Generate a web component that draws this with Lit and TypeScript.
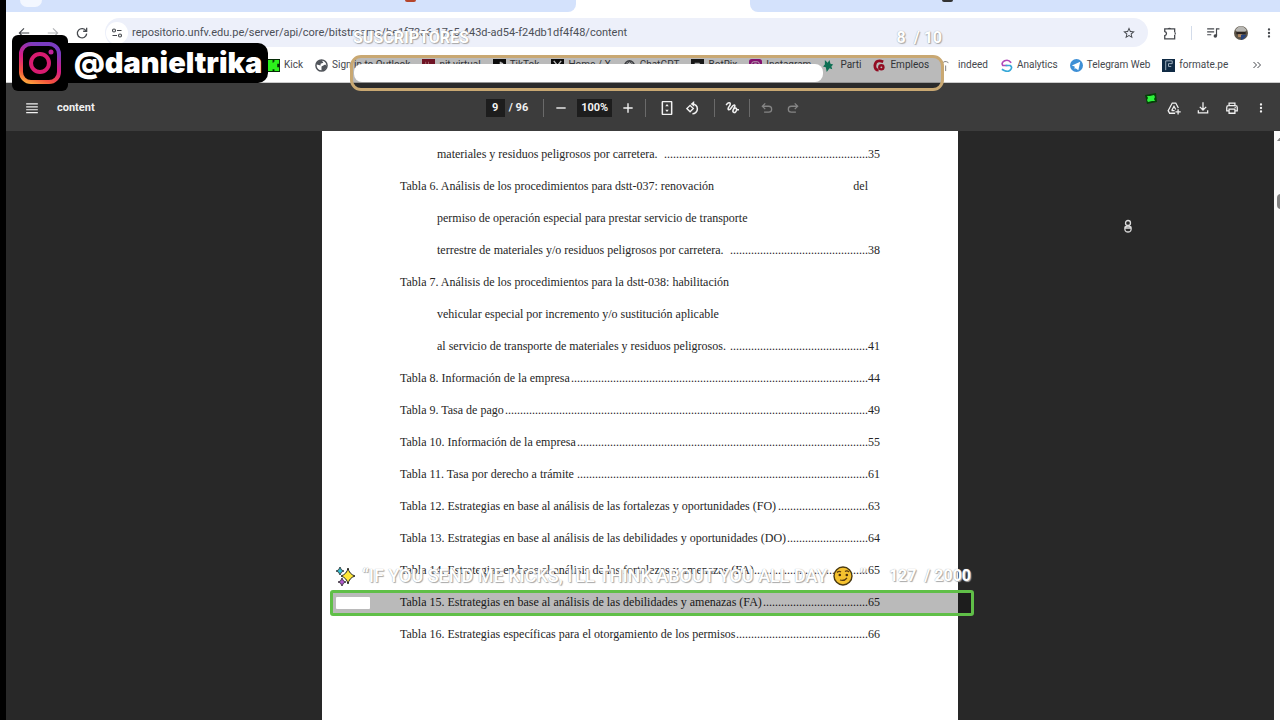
import { LitElement, html, svg, css, nothing } from "lit";
import { customElement } from "lit/decorators.js";

const glyph = (body: unknown, cls = "ico", box = "0 0 24 24") =>
  html`<svg class=${cls} viewBox=${box} aria-hidden="true">${body}</svg>`;
const fill = (d: string) => svg`<path fill="currentColor" d=${d}></path>`;
const line = (d: string, w = 2) =>
  svg`<path fill="none" stroke="currentColor" stroke-width=${w} d=${d}></path>`;

const ICON = {
  back: line("M21 12H4M12 4l-8 8 8 8"),
  forward: line("M3 12h17M12 4l8 8-8 8"),
  reload: svg`${line("M19 8.500A8 8 0 1 0 20 13", 2.200)}${line("M20 3v6h-6", 2.200)}`,
  tune: svg`${line("M12 7h9M3 17h9", 2.200)}<circle cx="6" cy="7" r="3" fill="none" stroke="currentColor" stroke-width="2.2"></circle><circle cx="18" cy="17" r="3" fill="none" stroke="currentColor" stroke-width="2.2"></circle>`,
  star: fill("M22 9.240l-7.190-.620L12 2 9.190 8.630 2 9.240l5.460 4.730L5.820 21 12 17.270 18.180 21l-1.630-7.030L22 9.240zM12 15.400l-3.760 2.270 1-4.280-3.320-2.880 4.380-.380L12 6.100l1.710 4.040 4.380.380-3.320 2.880 1 4.280L12 15.400z"),
  puzzle: svg`${line("M3 5h17v5.500M20 15.500V22H3v-5.500q3-.500 3-3.500t-3-3.500V4", 2.200)}${fill("M8 5a3.200 3.200 0 0 1 6 0zM20 10a3.200 3.200 0 0 1 0 6z")}`,
  queue: svg`${line("M2 5h12M2 10h12M2 15h7", 2)}${line("M18 17V5h5", 2)}${fill("M16 14a3 3 0 1 0 3 3v-3z")}`,
  dots: fill("M12 8a2 2 0 1 0 0-4 2 2 0 0 0 0 4zm0 2a2 2 0 1 0 0 4 2 2 0 0 0 0-4zm0 6a2 2 0 1 0 0 4 2 2 0 0 0 0-4z"),
  menu: line("M2 5h20M2 10h20M2 15h20M2 20h20", 2),
  minus: line("M4 12h16", 2.400),
  plus: line("M4 12h16M12 4v16", 2.400),
  fit: svg`<rect x="4" y="1" width="16" height="22" rx="1" fill="none" stroke="currentColor" stroke-width="2.6"></rect>${fill("M12 5l3 4h-6zM12 19l3-4h-6z")}`,
  rotate: svg`${line("M7 7.500L12.500 13 7 18.500 1.500 13z", 2.400)}${line("M11 5a8.500 8.500 0 1 1 0 17", 2.600)}${fill("M14 0v10L8 5z")}`,
  draw: line("M2 7c3-5 7-5 7-2 0 4-6 7-3 10 4 2 6-9 10-8 4 1-5 8-2 12 3 3 6-2 6-5 0-3-4-2-4 0m4 1h4", 2.600),
  undo: line("M7 19h8a5 5 0 0 0 0-10H4M9 4L4 9l5 5", 2.200),
  redo: line("M17 19H9A5 5 0 0 1 9 9h11M15 4l5 5-5 5", 2.200),
  drive: svg`${line("M14 21H4.500L2 16.500 9 3.500h6l4.500 8.500M8 16.500l4-7.500 3 5.500M8 16.500h5", 2.200)}${line("M19 14v9M14.500 18.500h9", 2.200)}`,
  download: svg`${line("M12 2v13M6.500 10l5.500 5.500 5.500-5.500M4 16v4.500h16V16", 2.200)}`,
  print: svg`${line("M7 8V3.500h10V8M7 17H3v-6q0-3 3-3h12q3 0 3 3v6h-4M7 14h10v7H7z", 2.200)}${fill("M16.500 10h2v2h-2z")}`,
  chevrons: line("M5 6l6 6-6 6M13 6l6 6-6 6", 2),
};

const insta = svg`
  <defs><linearGradient id="ig" x1="0" y1="1" x2=".4" y2="0">
    <stop offset="0" stop-color="#ffb43c"></stop><stop offset=".25" stop-color="#f5553c"></stop>
    <stop offset=".6" stop-color="#d81b86"></stop><stop offset="1" stop-color="#7a3cc0"></stop>
  </linearGradient></defs>
  <rect x="2" y="2" width="38" height="38" rx="10" fill="none" stroke="url(#ig)" stroke-width="4"></rect>
  <circle cx="21" cy="21" r="9" fill="none" stroke="#d81b70" stroke-width="4"></circle>
  <circle cx="32" cy="10" r="2.500" fill="#c2219a"></circle>`;

const kick = svg`<rect width="14" height="14" fill="#062b06"></rect><path fill="#2cf01c" d="M1 1h5v3h1V3h1V1h5v4h-2v4h2v4H8v-2H6v2H1z"></path>`;

const MARKS: { text: string; icon: unknown }[] = [
  { text: "Kick", icon: kick },
  { text: "Sign in to Outlook", icon: svg`<circle cx="7" cy="7" r="6" fill="#fff" stroke="#50545a" stroke-width="1.6"></circle><path fill="#50545a" d="M2 3l5-2 2 3-3 1v2L2 6zM7 8l4-2 2 2-3 4-3 1z"></path>` },
  { text: "nit virtual", icon: svg`<rect width="14" height="14" fill="#981b32"></rect><path stroke="#d98a96" d="M4 3v8M7 3v8"></path>` },
  { text: "TikTok", icon: svg`<rect width="14" height="14" fill="#111"></rect><path fill="none" stroke="#fff" stroke-width="1.500" d="M8 3v6a2 2 0 1 1-2-2M8 3q0 2 3 2"></path>` },
  { text: "Home / X", icon: svg`<rect width="14" height="14" fill="#111"></rect><path stroke="#fff" stroke-width="1.500" d="M3 2l8 10M11 2L3 12"></path>` },
  { text: "ChatGPT", icon: svg`<circle cx="7" cy="7" r="5" fill="none" stroke="#54575c" stroke-width="1.8"></circle><path fill="none" stroke="#54575c" d="M7 3l3 2v4l-3 2-3-2V5zM4 5l6 4"></path>` },
  { text: "BotRix", icon: svg`<rect width="14" height="14" fill="#222"></rect><path fill="#ddd" d="M4 4h5l2 3-2 4H4z"></path>` },
  { text: "Instagram", icon: svg`<rect width="14" height="14" rx="3" fill="#b5199a"></rect><rect x="3" y="3" width="8" height="8" rx="2" fill="none" stroke="#fff"></rect><circle cx="7" cy="7" r="2" fill="none" stroke="#fff"></circle>` },
  { text: "Parti", icon: svg`<path fill="#159a74" d="M2 1l3 3 2-3 1 4 3 1-2 2 1 3-3-1-3 4-1-5-3-1 2-2z"></path>` },
  { text: "Empleos", icon: svg`<path fill="none" stroke="#c8102e" stroke-width="3" d="M11 3Q3 0 2 7q0 5 4 5"></path><circle cx="9" cy="9" r="3.500" fill="#c8102e"></circle><circle cx="9" cy="9" r="1" fill="#fff"></circle>` },
  { text: "indeed", icon: svg`<path fill="none" stroke="#777" d="M1 5q3-4 7-1M5 7v6"></path>` },
  { text: "Analytics", icon: svg`<path fill="none" stroke="#b04bb8" stroke-width="1.800" d="M12 4Q9 0 5 2T3 7h5"></path><path fill="none" stroke="#37a8d8" stroke-width="1.800" d="M6 7h5q3 2 0 5t-9-1"></path>` },
  { text: "Telegram Web", icon: svg`<circle cx="7" cy="7" r="7" fill="#3d8fd6"></circle><path fill="#fff" d="M2 7l9-4-2 9-3-2-1 1V8z"></path>` },
  { text: "formate.pe", icon: svg`<rect width="14" height="14" fill="#0f2a44"></rect><path fill="none" stroke="#a9b8c6" d="M4 12V2h7v3H7v3h3"></path>` },
];

type Row = { text: string; page?: string; dots?: number; inner?: boolean; tail?: string };
const ROWS: Row[] = [
  { text: "materiales y residuos peligrosos por carretera. ", page: "35", dots: 68, inner: true },
  { text: "Tabla 6. Análisis de los procedimientos para dstt-037: renovación", tail: "del" },
  { text: "permiso de operación especial para prestar servicio de transporte", inner: true },
  { text: "terrestre de materiales y/o residuos peligrosos por carretera. ", page: "38", dots: 46, inner: true },
  { text: "Tabla 7. Análisis de los procedimientos para la dstt-038: habilitación" },
  { text: "vehicular especial por incremento y/o sustitución aplicable", inner: true },
  { text: "al servicio de transporte de materiales y residuos peligrosos. ", page: "41", dots: 46, inner: true },
  { text: "Tabla 8. Información de la empresa", page: "44", dots: 99 },
  { text: "Tabla 9. Tasa de pago", page: "49", dots: 121 },
  { text: "Tabla 10. Información de la empresa", page: "55", dots: 97 },
  { text: "Tabla 11. Tasa por derecho a trámite", page: "61", dots: 97 },
  { text: "Tabla 12. Estrategias en base al análisis de las fortalezas y oportunidades (FO)", page: "63", dots: 30 },
  { text: "Tabla 13. Estrategias en base al análisis de las debilidades y oportunidades (DO)", page: "64", dots: 27 },
  { text: "Tabla 14. Estrategias en base al análisis de las fortalezas y amenazas (FA)", page: "65", dots: 38 },
  { text: "Tabla 15. Estrategias en base al análisis de las debilidades y amenazas (FA)", page: "65", dots: 35 },
  { text: "Tabla 16. Estrategias específicas para el otorgamiento de los permisos", page: "66", dots: 44 },
];

@customElement("browser-chrome")
class BrowserChrome extends LitElement {
  static styles = css`
    :host { display: block; background: #fff; color: #45484d; font-family: Roboto, sans-serif; }
    button { all: unset; display: grid; place-items: center; box-sizing: border-box; }
    .tabs { display: grid; grid-template-columns: 570px 174px 1fr; height: 12px; background: #fff; }
    .tab { background: #d4e2fc; }
    .left { border-bottom-right-radius: 8px; display: flex; justify-content: space-between; padding: 0 160px 0 14px; }
    .right { border-bottom-left-radius: 8px; padding: 0 0 0 192px; }
    .new { width: 22px; height: 7px; background: #f3f7ff; border-radius: 0 0 11px 11px; }
    .fav { width: 11px; height: 2px; border-radius: 0 0 4px 4px; background: #b5452b; }
    .dark { background: #333; }
    .bar { display: flex; align-items: center; height: 41px; padding: 0 4px 0 11px; }
    .nav { display: flex; gap: 15px; margin-right: 16px; }
    .ico { width: 14px; height: 14px; display: block; }
    .dim { color: #b3b5b8; }
    .omni { flex: 1; display: flex; align-items: center; height: 29px; background: #edf0fa; border-radius: 15px; padding: 0 12px 0 1px; }
    .site { width: 22px; height: 22px; border-radius: 50%; background: #fff; }
    .site .ico { width: 12px; height: 12px; }
    input { flex: 1; min-width: 0; border: 0; background: none; outline: 0; padding: 0 0 0 4px; color: #4b4f57; font: 11px/16px Roboto, sans-serif; }
    .tools { display: flex; align-items: center; gap: 14px; padding-left: 15px; }
    .sep { width: 1px; height: 14px; background: #d3dcea; }
    .marks { box-sizing: border-box; display: flex; align-items: center; height: 30px; padding: 0 17px 5px 261px; border-bottom: 1px solid #ccc; }
    .list { display: flex; gap: 12px; }
    a { display: flex; align-items: center; gap: 4px; color: inherit; text-decoration: none; font-size: 10px; line-height: 16px; white-space: nowrap; }
    .mi { width: 13px; height: 13px; }
    .more { margin-left: auto; }
    .more .ico { width: 12px; height: 12px; }
  `;
  render() {
    return html`
      <div class="tabs">
        <div class="tab left"><div class="new"></div><div class="fav"></div></div>
        <div></div>
        <div class="tab right"><div class="fav dark"></div></div>
      </div>
      <div class="bar">
        <div class="nav">
          <button aria-label="Atrás">${glyph(ICON.back)}</button>
          <button class="dim" aria-label="Adelante">${glyph(ICON.forward)}</button>
          <button aria-label="Recargar">${glyph(ICON.reload)}</button>
        </div>
        <div class="omni">
          <button class="site" aria-label="Información del sitio">${glyph(ICON.tune)}</button>
          <input aria-label="Dirección" value="repositorio.unfv.edu.pe/server/api/core/bitstreams/be1f72a6-17c5-443d-ad54-f24db1df4f48/content" />
          <button aria-label="Favorito">${glyph(ICON.star)}</button>
        </div>
        <div class="tools">
          <button aria-label="Extensiones">${glyph(ICON.puzzle)}</button>
          <span class="sep"></span>
          <button aria-label="Multimedia">${glyph(ICON.queue)}</button>
          <button aria-label="Perfil">${glyph(svg`<circle cx="12" cy="12" r="12" fill="#5d5548"></circle><path fill="#b9b8b4" d="M2 7Q12-6 22 7l-3 3H5z"></path><path fill="#2c2522" d="M4 10h16v4H4z"></path><path fill="#b38a63" d="M7 14h7v5H7z"></path><path fill="#27437c" d="M12 15h9q-2 7-9 9z"></path>`)}</button>
          <button aria-label="Menú">${glyph(ICON.dots)}</button>
        </div>
      </div>
      <nav class="marks">
        <div class="list">
          ${MARKS.map((m) => html`<a href="#">${glyph(m.icon, "mi", "0 0 14 14")}<span>${m.text}</span></a>`)}
        </div>
        <button class="more" aria-label="Más marcadores">${glyph(ICON.chevrons)}</button>
      </nav>`;
  }
}

@customElement("pdf-viewer")
class PdfViewer extends LitElement {
  static styles = css`
    :host { display: flex; flex-direction: column; min-height: 0; background: #282828; }
    button { all: unset; display: grid; place-items: center; }
    .ico { width: 14px; height: 14px; display: block; }
    .bar { box-sizing: border-box; display: grid; grid-template-columns: 1fr auto 1fr; align-items: center; height: 48px; padding-top: 2px; background: #3c3c3c; color: #f1f1f1; font: bold 11px/18px Roboto, sans-serif; }
    .side { display: flex; align-items: center; gap: 18px; padding-left: 19px; }
    .end { justify-content: flex-end; gap: 15px; padding: 0 12px 0 0; }
    .mid { display: flex; align-items: center; gap: 10px; }
    .group { display: flex; align-items: center; gap: 12px; }
    .zooms { gap: 9px; }
    .wide { padding: 0 4px 0 4px; }
    input { box-sizing: border-box; height: 18px; padding: 0; border: 0; background: #1d1d1d; color: inherit; font: inherit; text-align: center; outline: 0; }
    .num { width: 19px; }
    .pages { gap: 4px; padding-right: 5px; }
    .zoom { width: 35px; }
    .sep { width: 1px; height: 18px; background: #6a6a6a; }
    .off { color: #858585; }
    .title { margin: 0; font: inherit; }
    .body { flex: 1; min-height: 0; display: grid; grid-template-columns: 1fr 6px; }
    .stage { overflow: hidden; display: flex; justify-content: center; }
    .page { width: 636px; box-sizing: border-box; background: #fff; padding: 7px 78px 0; color: #262626; font: 12px/32px "Liberation Serif", serif; }
    .row { display: flex; white-space: pre; }
    .inner { padding-left: 37px; }
    .dots { margin-left: auto; }
    .tail { margin-left: auto; padding-right: 12px; }
    .scroll { background: #fbfbfb; overflow: hidden; padding: 5px 0 0 3px; }
    .up { width: 8px; height: 5px; background: #888; clip-path: polygon(50% 0, 100% 100%, 0 100%); }
    .thumb { width: 10px; height: 15px; margin-top: 53px; border-radius: 4px; background: #858585; }
  `;
  render() {
    const b = (name: string, i: unknown, cls = "") =>
      html`<button class=${cls} aria-label=${name}>${glyph(i)}</button>`;
    const sep = html`<span class="sep"></span>`;
    return html`
      <header class="bar">
        <div class="side">${b("Menú", ICON.menu)}<h1 class="title">content</h1></div>
        <div class="mid">
          <div class="group pages"><input class="num" aria-label="Página" value="9" /><span>/ 96</span></div>
          ${sep}
          <div class="group zooms">
            ${b("Alejar", ICON.minus)}
            <input class="zoom" aria-label="Zoom" value="100%" />
            ${b("Acercar", ICON.plus)}
          </div>
          ${sep}
          <div class="group wide">${b("Ajustar a la página", ICON.fit)}${b("Girar", ICON.rotate)}</div>
          ${sep}${b("Dibujar", ICON.draw)}${sep}
          <div class="group">${b("Deshacer", ICON.undo, "off")}${b("Rehacer", ICON.redo, "off")}</div>
        </div>
        <div class="side end">
          ${b("Guardar en Drive", ICON.drive)}${b("Descargar", ICON.download)}${b("Imprimir", ICON.print)}${b("Más", ICON.dots)}
        </div>
      </header>
      <div class="body">
        <main class="stage">
          <article class="page">
            ${ROWS.map((r) => html`<div class="row ${r.inner ? "inner" : ""}"><span>${r.text}</span>${r.page
              ? html`<span class="dots">${".".repeat(r.dots ?? 0)}${r.page}</span>`
              : nothing}${r.tail ? html`<span class="tail">${r.tail}</span>` : nothing}</div>`)}
          </article>
        </main>
        <div class="scroll"><div class="up"></div><div class="thumb"></div></div>
      </div>`;
  }
}

@customElement("app-root")
class AppRoot extends LitElement {
  static styles = css`
    :host { display: block; position: relative; height: 100vh; overflow: hidden; background: #000; }
    .window { display: flex; flex-direction: column; height: 100%; margin-left: 6px; }
    pdf-viewer { flex: 1; }
    .over { position: absolute; }
    .brand { left: 12px; top: 35px; display: flex; align-items: center; }
    .logo { background: #000; border-radius: 6px; padding: 7px; }
    .ig { display: block; width: 42px; height: 42px; }
    .handle { background: #000; border-radius: 0 10px 10px 0; color: #fff; padding: 0 6px; font: 900 29px/40px Inter, sans-serif; }
    .goal { display: flex; justify-content: space-between; align-items: center; color: #fff; white-space: pre; text-shadow: 0 0 1px #999, 1px 1px 1px #aaa; }
    .subs { left: 353px; top: 26px; width: 589px; font: bold 16px/24px Roboto, sans-serif; }
    .kicks { left: 336px; top: 565px; width: 635px; font: bold 16px/22px Roboto, sans-serif; }
    .msg { display: flex; align-items: center; gap: 6px; font-size: 18px; font-weight: 500; }
    .emo { width: 20px; height: 20px; }
    .meter { box-sizing: border-box; background: rgba(0, 0, 0, 0.27); }
    .gold { left: 350px; top: 55px; width: 594px; height: 36px; border: 3px solid #c9a872; border-radius: 11px; padding: 6px 1px; }
    .green { left: 330px; top: 590px; width: 644px; height: 26px; border: 3px solid #60bf48; border-radius: 3px; padding: 4px 3px; }
    .fill { height: 18px; border-radius: 8px; background: #fff; }
    .green .fill { height: 12px; border-radius: 1px; }
    .pin { left: 1145px; top: 93px; width: 12px; height: 11px; }
    .person { left: 1122px; top: 219px; width: 12px; height: 14px; }
  `;
  render() {
    return html`
      <div class="window"><browser-chrome></browser-chrome><pdf-viewer></pdf-viewer></div>
      <div class="over brand">
        <div class="logo">${glyph(insta, "ig", "0 0 42 42")}</div>
        <div class="handle">@danieltrika</div>
      </div>
      <div class="over meter gold" role="progressbar" aria-label="Suscriptores" aria-valuenow="8" aria-valuemax="10"><div class="fill" style="width:${(8 / 10) * 100 + "%"}"></div></div>
      <div class="over goal subs"><span>SUSCRIPTORES</span><span>8  / 10</span></div>
      <div class="over meter green" role="progressbar" aria-label="Kicks" aria-valuenow="127" aria-valuemax="2000"><div class="fill" style="width:${(127 / 2000) * 100 - 1 + "%"}"></div></div>
      <div class="over goal kicks">
        <span class="msg">${glyph(svg`<path fill="#ffe838" stroke="#222" stroke-width="1" d="M12 2q1 6 7 8-6 2-7 8-1-6-7-8 6-2 7-8z"></path><path fill="#35c3d8" stroke="#222" stroke-width=".8" d="M4 1l1.500 3L8 5 5.500 6 4 9 2.500 6 0 5l2.500-1z"></path><path fill="#b45bd0" stroke="#222" stroke-width=".8" d="M6 12l1.500 3L10 16l-2.500 1L6 20l-1.500-3L2 16l2.500-1z"></path>`, "emo", "0 0 20 20")}<span>“IF YOU SEND ME KICKS, I'LL THINK ABOUT YOU ALL DAY</span>${glyph(svg`<circle cx="10" cy="10" r="9" fill="#f5c22f" stroke="#4a3a12" stroke-width="1.400"></circle><path fill="none" stroke="#5a3b10" stroke-width="1.200" d="M4 6.500q2-2 4-.500M12 5.500q2-1.500 4 .500M7 14q4 1.500 7-2"></path><circle cx="6.800" cy="9" r="1.300" fill="#4a2c0c"></circle><circle cx="13.800" cy="9" r="1.300" fill="#4a2c0c"></circle>`, "emo", "0 0 20 20")}<span>”</span></span>
        <span>127  / 2000</span>
      </div>
      ${glyph(svg`<path fill="#063f08" d="M0 2l11-2 1 9-10 2z"></path><path fill="#2df23c" d="M2 3l3 0 4-1 1 2-1 2 1 2-3 0-4 1-1-2 1-2z"></path>`, "over pin", "0 0 12 11")}
      ${glyph(svg`<circle cx="6" cy="4" r="2.500" fill="none" stroke="#ddd" stroke-width="1.300"></circle><path fill="none" stroke="#ddd" stroke-width="1.300" d="M3 8q-1 5 3 5t3-5q-3-2-6 0zM3 9h6"></path>`, "over person", "0 0 12 14")}`;
  }
}
